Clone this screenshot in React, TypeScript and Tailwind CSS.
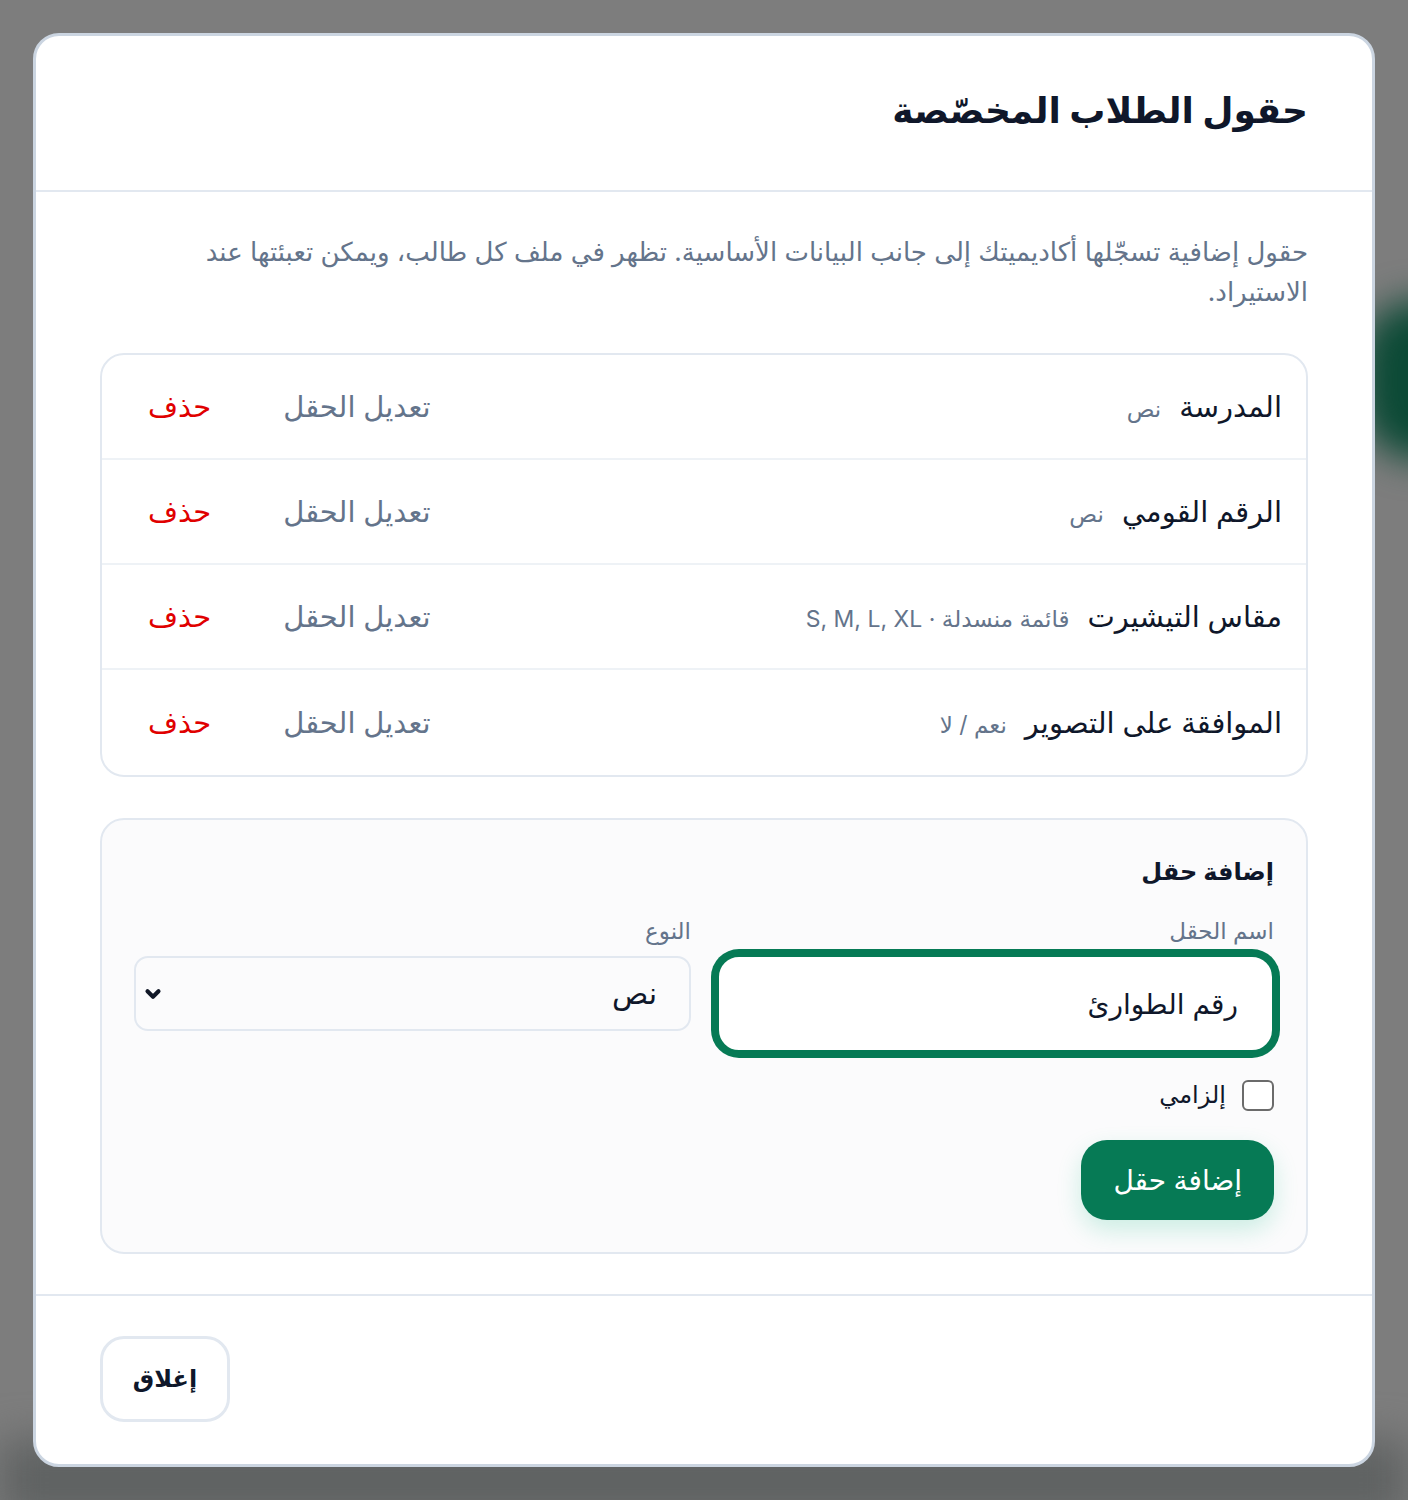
import React from "react";

const rows = [
  { name: "المدرسة", meta: "نص" },
  { name: "الرقم القومي", meta: "نص" },
  { name: "مقاس التيشيرت", meta: "قائمة منسدلة · S, M, L, XL" },
  { name: "الموافقة على التصوير", meta: "نعم / لا" },
];

export default function App() {
  return (
    <div
      dir="rtl"
      className="relative min-h-[1500px] w-full overflow-hidden bg-[#7d7d7d] pt-[33px] pb-[33px] px-[33px]"
      style={{ fontFamily: '"Inter", "Noto Sans", "DejaVu Sans", sans-serif' }}
    >
      <div className="pointer-events-none absolute left-[1360px] top-[300px] h-[160px] w-[120px] rounded-full bg-[#0c4a36] blur-[18px]" />
      <div className="pointer-events-none absolute left-0 top-[1440px] h-[80px] w-full bg-[#5f6262] blur-[20px]" />
      <div className="relative flex flex-col rounded-[26px] border-[3px] border-[#cbd5e1] bg-white">
        <div className="border-b-2 border-[#e2e8f0] px-[64px] pt-[48px] pb-[54px]">
          <h1 className="text-[36px] font-bold leading-[52px] text-[#0f172a]">حقول الطلاب المخصّصة</h1>
        </div>
        <div className="flex flex-col gap-[41px] px-[64px] pt-[40px] pb-[40px]">
          <p className="text-[26px] leading-[40px] text-[#64748b]">
            حقول إضافية تسجّلها أكاديميتك إلى جانب البيانات الأساسية. تظهر في ملف كل طالب، ويمكن تعبئتها عند الاستيراد.
          </p>
          <div className="flex flex-col rounded-[24px] border-2 border-[#e2e8f0]">
            {rows.map((r, i) => (
              <div
                key={i}
                className={
                  "flex h-[105px] items-center justify-between pr-[24px] pl-[46px] " +
                  (i < rows.length - 1 ? "border-b-2 border-[#eef2f6]" : "")
                }
              >
                <div className="flex items-baseline gap-[18px]">
                  <span className="text-[29px] font-medium text-[#0f172a]">{r.name}</span>
                  <span className="text-[23px] text-[#64748b]">{r.meta}</span>
                </div>
                <div className="flex items-center gap-[72px]">
                  <span className="text-[29px] font-medium text-[#64748b]">تعديل الحقل</span>
                  <span className="text-[29px] font-medium text-[#e00000]">حذف</span>
                </div>
              </div>
            ))}
          </div>
          <div className="flex flex-col rounded-[24px] border-2 border-[#e2e8f0] bg-[#fbfbfc] px-[32px] pt-[32px] pb-[32px]">
            <h2 className="text-[24px] font-semibold leading-[40px] text-[#0f172a]">إضافة حقل</h2>
            <div className="mt-[24px] grid grid-cols-2 gap-[26px]">
              <div className="flex flex-col">
                <label className="text-[23px] leading-[30px] text-[#64748b]">اسم الحقل</label>
                <div className="mt-[9px] flex h-[97px] items-center rounded-[22px] border-2 border-[#067a55] bg-white px-[34px] ring-[6px] ring-[#067a55]">
                  <span className="text-[28px] text-[#0f172a]">رقم الطوارئ</span>
                </div>
              </div>
              <div className="flex flex-col">
                <label className="text-[23px] leading-[30px] text-[#64748b]">النوع</label>
                <div className="mt-[10px] flex h-[75px] items-center justify-between rounded-[14px] border-2 border-[#e2e8f0] bg-[#fbfbfc] pr-[32px] pl-[6px]">
                  <span className="text-[30px] text-[#0f172a]">نص</span>
                  <svg width="22" height="22" viewBox="0 0 24 24" fill="none" stroke="#111827" strokeWidth="4.5" strokeLinecap="round" strokeLinejoin="round">
                    <path d="M6 9l6 6 6-6" />
                  </svg>
                </div>
              </div>
            </div>
            <div className="mt-[25px] flex items-center gap-[16px]">
              <div className="h-[31px] w-[32px] rounded-[6px] border-2 border-[#6b6b6b] bg-white" />
              <span className="text-[24px] text-[#0f172a]">إلزامي</span>
            </div>
            <div className="mt-[27px] flex">
              <button className="h-[80px] rounded-[26px] bg-[#067a55] px-[32px] text-[28px] font-medium text-white shadow-[0_10px_24px_rgba(16,185,129,0.2)]">
                إضافة حقل
              </button>
            </div>
          </div>
        </div>
        <div className="flex justify-end border-t-2 border-[#e2e8f0] px-[64px] pt-[40px] pb-[42px]">
          <button className="h-[86px] w-[130px] rounded-[24px] border-[3px] border-[#e2e8f0] bg-white text-[24px] font-bold text-[#0f172a]">
            إغلاق
          </button>
        </div>
      </div>
    </div>
  );
}
